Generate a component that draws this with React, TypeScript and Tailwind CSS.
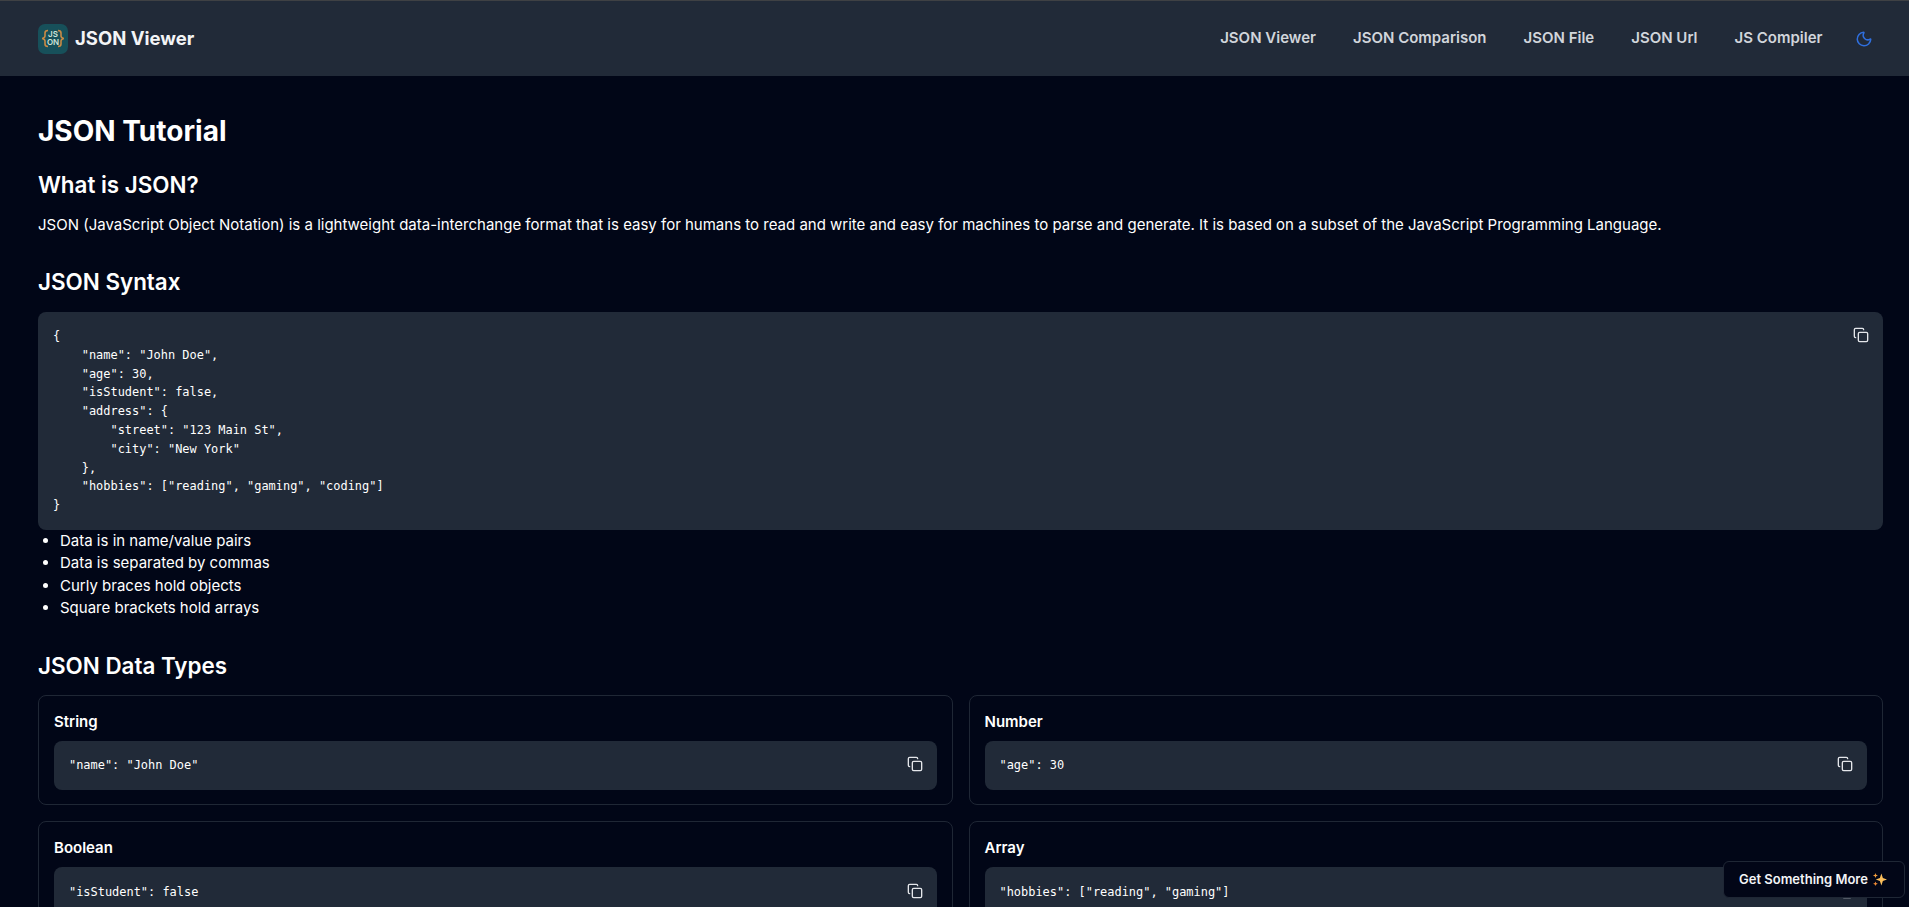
import { Copy, Moon } from "lucide-react";

const navLinks = ["JSON Viewer", "JSON Comparison", "JSON File", "JSON Url", "JS Compiler"];

const syntaxSample = `{
    "name": "John Doe",
    "age": 30,
    "isStudent": false,
    "address": {
        "street": "123 Main St",
        "city": "New York"
    },
    "hobbies": ["reading", "gaming", "coding"]
}`;

const dataTypes = [
    { title: "String", code: '"name": "John Doe"' },
    { title: "Number", code: '"age": 30' },
    { title: "Boolean", code: '"isStudent": false' },
    { title: "Array", code: '"hobbies": ["reading", "gaming"]' },
];

const rules = [
    "Data is in name/value pairs",
    "Data is separated by commas",
    "Curly braces hold objects",
    "Square brackets hold arrays",
];

function Logo() {
    return (
        <div className="relative flex h-[30px] w-[30px] items-center justify-center rounded-[7px] bg-[#17505a]">
            <svg viewBox="0 0 30 30" className="absolute inset-0 h-full w-full" fill="none" stroke="#c98a45" strokeWidth="1.6">
                <path d="M10 6.500c-2 0-3 .5-3 2.500v3c0 1.500-.8 2-2.800 2.500 2 .5 2.800 1 2.800 2.500v3c0 2 1 2.500 3 2.500" />
                <path d="M20 6.500c2 0 3 .5 3 2.500v3c0 1.500.8 2 2.800 2.500-2 .5-2.800 1-2.800 2.500v3c0 2-1 2.500-3 2.500" />
            </svg>
            <div className="text-center font-['Inter',sans-serif] text-[8px] leading-[7.5px] font-semibold text-[#cfe3d8]">
                <div>JS</div>
                <div>ON</div>
            </div>
        </div>
    );
}

function CopyButton() {
    return <Copy className="h-4 w-4 text-[#e5e7eb]" strokeWidth={2} />;
}

function Sparkles() {
    return (
        <svg viewBox="0 0 16 16" className="h-[15px] w-[15px]">
            <path d="M10 1.500 11.600 6.400 16 8l-4.400 1.600L10 14.500 8.400 9.600 4 8l4.400-1.600z" fill="#fbbf5c" />
            <path d="M3.700 1 4.400 3l1.900.7-1.900.7-.7 2-.7-2L1 3.700l2-.7z" fill="#f59e3c" />
            <path d="M3.700 10l.7 1.800 1.800.7-1.800.7-.7 1.800-.7-1.800-1.800-.7 1.800-.7z" fill="#f08a35" />
        </svg>
    );
}

export default function App() {
    return (
        <div className="relative h-[907px] overflow-hidden bg-[#010617] font-['Inter',sans-serif] text-white">
            <header className="flex h-[76px] items-center justify-between border-t border-[#3f4144] bg-[#212a38] pr-[36px] pl-[38px]">
                <div className="flex items-center gap-[7px]">
                    <Logo />
                    <span className="text-[18.5px] font-bold text-[#f3f4f6]">JSON Viewer</span>
                </div>
                <nav className="flex items-center gap-[37px]">
                    {navLinks.map((link) => (
                        <a key={link} className="text-[15px] font-semibold text-[#d1d5db]">
                            {link}
                        </a>
                    ))}
                    <Moon className="-ml-[4.5px] h-[18px] w-[18px] text-[#2f6fde]" strokeWidth={2} />
                </nav>
            </header>

            <main className="pt-[33px] pr-[26px] pl-[38px]">
                <h1 className="text-[28px] leading-[45px] font-bold">JSON Tutorial</h1>

                <h2 className="mt-[15px] text-[22.4px] leading-[32px] font-semibold">What is JSON?</h2>
                <p className="mt-[14px] text-[15px] leading-[20px]">
                    JSON (JavaScript Object Notation) is a lightweight data-interchange format that is easy for humans to read and write and easy for machines to parse and generate. It is based on a subset of the JavaScript Programming Language.
                </p>

                <h2 className="mt-[31px] text-[22.4px] leading-[32px] font-semibold">JSON Syntax</h2>
                <div className="relative mt-[14px] rounded-lg bg-[#212a38] p-[15px]">
                    <pre className="font-['DejaVu_Sans_Mono',monospace] text-[11.95px] leading-[18.8px] text-white">{syntaxSample}</pre>
                    <div className="absolute top-[15px] right-[14px]">
                        <CopyButton />
                    </div>
                </div>

                <ul className="list-disc pl-[22px] text-[15px] leading-[22.4px]">
                    {rules.map((rule) => (
                        <li key={rule}>{rule}</li>
                    ))}
                </ul>

                <h2 className="mt-[30px] text-[22.4px] leading-[32px] font-semibold">JSON Data Types</h2>
                <div className="mt-[13px] grid grid-cols-2 gap-4">
                    {dataTypes.map((item) => (
                        <div key={item.title} className="rounded-lg border border-[#1f2735] px-[15px] pt-[15px] pb-[14.6px]">
                            <h3 className="text-[15px] leading-[22px] font-semibold">{item.title}</h3>
                            <div className="mt-[8px] flex h-[49px] items-center justify-between rounded-lg bg-[#212a38] pr-[14px] pl-[15px]">
                                <code className="mt-[2px] font-['DejaVu_Sans_Mono',monospace] text-[11.95px] text-white">{item.code}</code>
                                <div className="mb-[2px]">
                                    <CopyButton />
                                </div>
                            </div>
                        </div>
                    ))}
                </div>
            </main>

            <button className="absolute top-[861px] right-[4px] flex h-[37px] w-[182px] items-center gap-[4px] rounded-md border border-[#1f2735] bg-[#020617] pl-[15px] text-[13px] font-semibold text-[#f3f4f6]">
                Get Something More
                <Sparkles />
            </button>
        </div>
    );
}
